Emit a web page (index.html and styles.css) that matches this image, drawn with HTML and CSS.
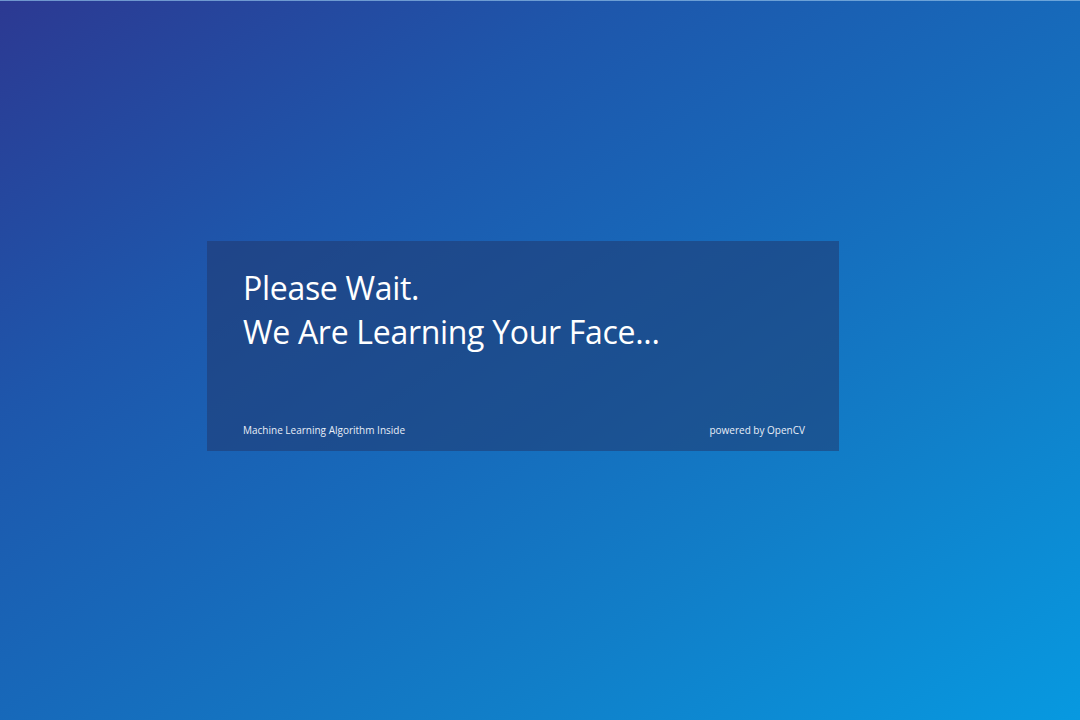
FILE: index.html
```html
<!DOCTYPE html>
<html lang="en">
<head>
<meta charset="utf-8">
<title>Please Wait</title>
<link rel="stylesheet" href="styles.css">
</head>
<body>
<div class="screen">
  <section class="panel">
    <h1 class="title">Please Wait.<br>We Are Learning Your Face...</h1>
    <footer class="meta">
      <span>Machine Learning Algorithm Inside</span>
      <span>powered by OpenCV</span>
    </footer>
  </section>
</div>
</body>
</html>
```

FILE: styles.css
```css
html, body {
  margin: 0;
  padding: 0;
}
body {
  width: 1080px;
  height: 720px;
  overflow: hidden;
  font-family: "Open Sans", "Noto Sans", sans-serif;
  color: #ffffff;
}
.screen {
  box-sizing: border-box;
  width: 1080px;
  height: 720px;
  padding: 240px 0 0 207px;
  border-top: 1px solid rgba(150, 170, 215, 0.7);
  background: linear-gradient(146deg, #2c3992 0%, #1e56ab 28%, #1769ba 50%, #117ec8 72%, #0799e0 100%);
}
.panel {
  box-sizing: border-box;
  width: 632px;
  height: 210px;
  padding: 25px 34px 14px 36px;
  display: flex;
  flex-direction: column;
  justify-content: space-between;
  background: rgba(32, 56, 110, 0.55);
}
.title {
  margin: 0;
  font-size: 32px;
  line-height: 44px;
  font-weight: 400;
  letter-spacing: -0.3px;
}
.meta {
  display: flex;
  justify-content: space-between;
  font-size: 10px;
  line-height: 14px;
  color: #e8eef8;
}
```
